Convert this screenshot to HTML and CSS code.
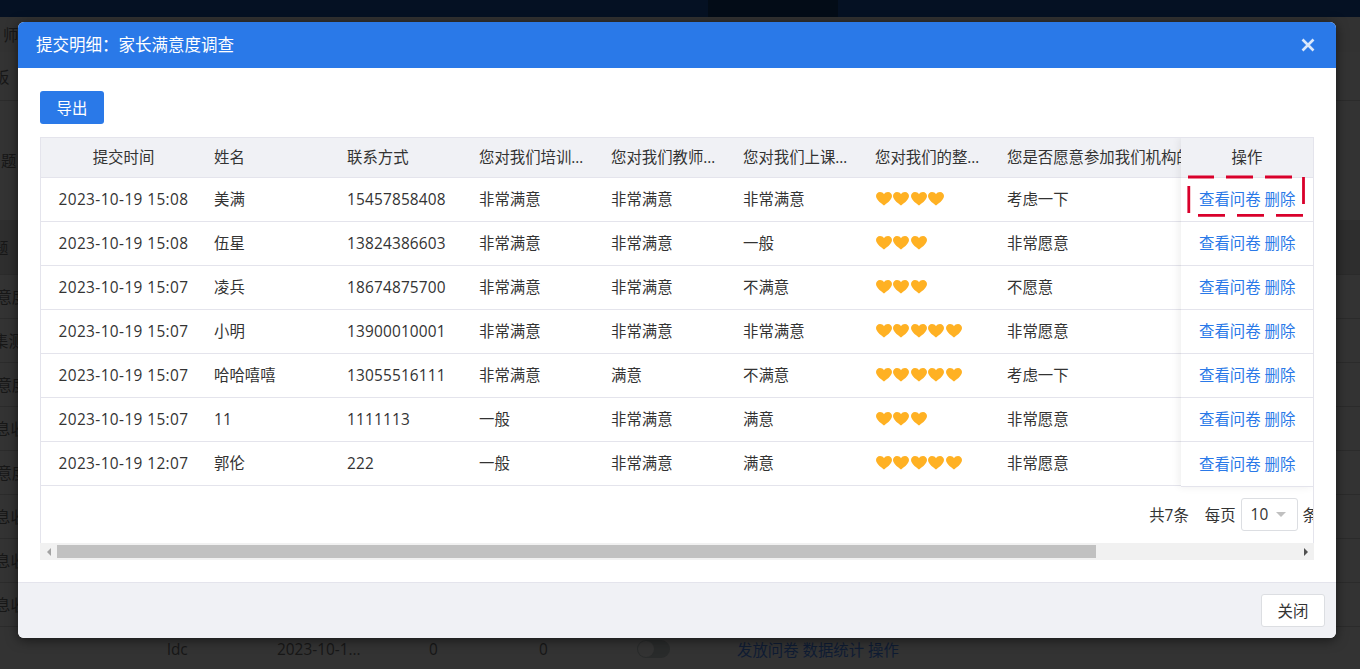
FILE: index.html
```html
<!DOCTYPE html>
<html lang="zh-CN">
<head>
<meta charset="utf-8">
<title>提交明细</title>
<link rel="stylesheet" href="styles.css">
</head>
<body>
<svg class="defs" width="0" height="0" aria-hidden="true"><symbol id="heart" viewBox="0 0 16 14"><path d="M8 13.6C6.6 12.3 0 8.4 0 4.1 0 1.7 1.8 0 4 0c1.7 0 3.2.9 4 2.2C8.800.9 10.300 0 12 0c2.200 0 4 1.700 4 4.100 0 4.300-6.600 8.200-8 9.500z"/></symbol></svg>
<div class="page">
  <div class="topbar"><div class="topbar-mid"></div></div>
  <div class="bg-block b1"><span class="lead l3">师</span></div>
  <div class="bg-block b2"><span class="lead ln6">板</span></div>
  <div class="bg-block b3"><span class="lead l1">题</span></div>
  <div class="bg-head"><span class="lead ln7">题</span></div>
  <div class="bg-row"><span class="lead ln19">满意度</span></div>
  <div class="bg-row"><span class="lead ln7b">集测</span></div>
  <div class="bg-row"><span class="lead ln19">满意度</span></div>
  <div class="bg-row"><span class="lead ln5">息收</span></div>
  <div class="bg-row"><span class="lead ln19">满意度</span></div>
  <div class="bg-row"><span class="lead ln5">息收</span></div>
  <div class="bg-row"><span class="lead ln5">息收</span></div>
  <div class="bg-row"><span class="lead ln5">息收</span></div>
  <div class="bg-row bg-last">
    <span class="c1">ldc</span><span class="c2">2023-10-1...</span><span class="c3">0</span><span class="c4">0</span>
    <span class="c5"><span class="switch"></span></span>
    <span class="bg-links">发放问卷 数据统计 操作</span>
  </div>

  <div class="modal">
    <div class="modal-head">
      <span class="modal-title">提交明细：家长满意度调查</span>
      <svg class="close-x" width="14" height="14" viewBox="0 0 14 14"><path d="M1.500 1.500l11 11M12.500 1.500l-11 11"/></svg>
    </div>
    <div class="modal-body">
      <button class="btn-primary">导出</button>
      <div class="grid-box">
        <table class="grid">
          <colgroup><col class="w1"><col class="w2"><col class="w3"><col class="w3"><col class="w3"><col class="w3"><col class="w3"><col class="w4"></colgroup>
          <thead>
            <tr><th class="center">提交时间</th><th>姓名</th><th>联系方式</th><th>您对我们培训机构的满意度</th><th>您对我们教师的满意度</th><th>您对我们上课的满意度</th><th>您对我们的整体评分</th><th>您是否愿意参加我们机构的</th></tr>
          </thead>
          <tbody>
            <tr><td class="center">2023-10-19 15:08</td><td>美满</td><td class="num">15457858408</td><td>非常满意</td><td>非常满意</td><td>非常满意</td><td><svg class="h"><use href="#heart"/></svg><svg class="h"><use href="#heart"/></svg><svg class="h"><use href="#heart"/></svg><svg class="h"><use href="#heart"/></svg></td><td>考虑一下</td></tr>
            <tr><td class="center">2023-10-19 15:08</td><td>伍星</td><td class="num">13824386603</td><td>非常满意</td><td>非常满意</td><td>一般</td><td><svg class="h"><use href="#heart"/></svg><svg class="h"><use href="#heart"/></svg><svg class="h"><use href="#heart"/></svg></td><td>非常愿意</td></tr>
            <tr><td class="center">2023-10-19 15:07</td><td>凌兵</td><td class="num">18674875700</td><td>非常满意</td><td>非常满意</td><td>不满意</td><td><svg class="h"><use href="#heart"/></svg><svg class="h"><use href="#heart"/></svg><svg class="h"><use href="#heart"/></svg></td><td>不愿意</td></tr>
            <tr><td class="center">2023-10-19 15:07</td><td>小明</td><td class="num">13900010001</td><td>非常满意</td><td>非常满意</td><td>非常满意</td><td><svg class="h"><use href="#heart"/></svg><svg class="h"><use href="#heart"/></svg><svg class="h"><use href="#heart"/></svg><svg class="h"><use href="#heart"/></svg><svg class="h"><use href="#heart"/></svg></td><td>非常愿意</td></tr>
            <tr><td class="center">2023-10-19 15:07</td><td>哈哈嘻嘻</td><td class="num">13055516111</td><td>非常满意</td><td>满意</td><td>不满意</td><td><svg class="h"><use href="#heart"/></svg><svg class="h"><use href="#heart"/></svg><svg class="h"><use href="#heart"/></svg><svg class="h"><use href="#heart"/></svg><svg class="h"><use href="#heart"/></svg></td><td>考虑一下</td></tr>
            <tr><td class="center">2023-10-19 15:07</td><td class="num">11</td><td class="num">1111113</td><td>一般</td><td>非常满意</td><td>满意</td><td><svg class="h"><use href="#heart"/></svg><svg class="h"><use href="#heart"/></svg><svg class="h"><use href="#heart"/></svg></td><td>非常愿意</td></tr>
            <tr><td class="center">2023-10-19 12:07</td><td>郭伦</td><td class="num">222</td><td>一般</td><td>非常满意</td><td>满意</td><td><svg class="h"><use href="#heart"/></svg><svg class="h"><use href="#heart"/></svg><svg class="h"><use href="#heart"/></svg><svg class="h"><use href="#heart"/></svg><svg class="h"><use href="#heart"/></svg></td><td>非常愿意</td></tr>
          </tbody>
        </table>
        <div class="pager">
          <span class="pg-total">共7条</span><span class="pg-label">每页</span>
          <span class="pg-select">10<i class="caret"></i></span><span class="pg-unit">条</span>
        </div>
        <div class="fixed-col">
          <div class="fixed-head">操作</div>
          <div class="fixed-cell"><a>查看问卷</a><a>删除</a></div>
          <div class="fixed-cell"><a>查看问卷</a><a>删除</a></div>
          <div class="fixed-cell"><a>查看问卷</a><a>删除</a></div>
          <div class="fixed-cell"><a>查看问卷</a><a>删除</a></div>
          <div class="fixed-cell"><a>查看问卷</a><a>删除</a></div>
          <div class="fixed-cell"><a>查看问卷</a><a>删除</a></div>
          <div class="fixed-cell fixed-last"><a>查看问卷</a><a>删除</a></div>
        </div>
      </div>
      <div class="scrollbar">
        <span class="sb-btn"><i class="tri-left"></i></span>
        <span class="sb-thumb"></span>
        <span class="sb-track"></span>
        <span class="sb-btn"><i class="tri-right"></i></span>
      </div>
    </div>
    <div class="modal-foot"><button class="btn-default">关闭</button></div>
    <svg class="annot" width="120" height="44" viewBox="0 0 120 44"><path d="M1 1h26M39 1h27M78 1h27M116.500 1v27M1.800 10v27M11 39.300h27M50 39.300h27M89 39.300h27"/></svg>
  </div>
</div>
</body>
</html>
```
FILE: styles.css
```css
* { box-sizing: border-box; }
html, body { margin: 0; padding: 0; }
body {
  font-family: "Open Sans", "Noto Sans CJK SC", sans-serif;
  font-size: 15.4px;
  color: #333;
  background: #333;
}
.defs { position: absolute; }
.page { position: relative; width: 1360px; height: 669px; overflow: hidden; background: #333; color: #171717; }

.topbar { height: 17px; background: #051123; }
.topbar-mid { width: 130px; height: 17px; margin-left: 708px; background: #030c17; }
.bg-block, .bg-head, .bg-row { display: flex; align-items: center; white-space: nowrap; border-bottom: 1px solid #2b2b2b; }
.b1 { height: 35px; border-bottom: 0; background: #323232; }
.b2 { height: 49px; }
.b3 { height: 119px; border-bottom: 0; }
.bg-head { height: 55px; background: #2e2e2e; }
.bg-row { height: 44px; }
.l3 { margin-left: 3px; }
.l1 { margin-left: 1px; }
.ln6 { margin-left: -6px; }
.ln7, .ln7b { margin-left: -7px; }
.ln5 { margin-left: -5px; }
.ln19 { margin-left: -19px; }
.bg-last { border-bottom: 0; }
.c1, .c2, .c3, .c4, .c5 { flex: none; }
.c1 { margin-left: 167px; width: 110px; }
.c2 { width: 152px; }
.c3 { width: 110px; }
.c4 { width: 98px; }
.c5 { width: 100px; }
.switch { display: block; width: 33px; height: 18px; border-radius: 9px; background: #292b2b; position: relative; }
.switch::before { content: ""; position: absolute; left: 1px; top: 1px; width: 16px; height: 16px; border-radius: 50%; background: #333; }
.bg-links { color: #0f1c33; }

.modal {
  position: absolute; left: 18px; top: 22px; width: 1318px; height: 616px;
  display: flex; flex-direction: column;
  background: #fff; border-radius: 6px;
  box-shadow: 0 2px 12px rgba(0, 0, 0, .55);
}
.modal-head {
  height: 46px; flex: none; display: flex; align-items: center; justify-content: space-between;
  padding: 0 21px 0 18px; background: #2a79e8; color: #fff; border-radius: 6px 6px 0 0;
}
.modal-title { font-size: 16.5px; line-height: 1; }
.close-x { fill: none; stroke: #dbe8fb; stroke-width: 2.6; }
.modal-body { flex: 1; min-height: 0; padding: 23px 22px 0; }
.btn-primary {
  display: block; width: 64px; height: 33px; margin: 0 0 13px; padding: 0; border: 0; border-radius: 3px;
  background: #2a79e8; color: #fff; font: inherit;
}
.grid-box {
  position: relative; width: 1274px; height: 406px; overflow: hidden;
  border: 1px solid #e4e4ec; border-bottom: 0;
}
.grid { border-collapse: separate; border-spacing: 0; table-layout: fixed; width: 1288px; }
.w1 { width: 165px; }
.w2 { width: 133px; }
.w3 { width: 132px; }
.w4 { width: 330px; }
.grid th, .grid td {
  padding: 0 8px; text-align: left; font-weight: 400; white-space: nowrap; overflow: hidden; text-overflow: ellipsis;
  border-bottom: 1px solid #e4e4ec; color: #333; line-height: 1;
}
.grid th { height: 40px; background: #f0f1f5; }
.grid td { height: 44px; }
.grid td.center { letter-spacing: .4px; }
.grid td.num { letter-spacing: .18px; }
.grid .center { text-align: center; }
.grid th:last-child { text-overflow: clip; }
.h { width: 16px; height: 14px; margin: 0 1px 0 .5px; fill: #ffb123; vertical-align: -1px; }
.pager { display: flex; justify-content: flex-end; align-items: center; height: 57px; margin-right: -5px; white-space: nowrap; color: #333; }
.pg-total { margin-right: 16px; }
.pg-label { margin-right: 5px; }
.pg-select {
  display: flex; align-items: center; width: 57px; height: 33px; padding-left: 9px; margin-right: 5px;
  border: 1px solid #dcdee2; border-radius: 3px; position: relative;
}
.caret { position: absolute; left: 34px; top: 13px; border: 5px solid transparent; border-top: 5px solid #c0c0c0; border-bottom: 0; }
.fixed-col {
  position: absolute; top: 0; right: 0; width: 132px; background: #fff;
  box-shadow: -2px 0 8px rgba(0, 0, 0, .07);
}
.fixed-head { height: 40px; display: flex; align-items: center; justify-content: center; background: #f0f1f5; border-bottom: 1px solid #e4e4ec; color: #333; line-height: 1; }
.fixed-cell { height: 44px; display: flex; align-items: center; padding-left: 18px; gap: 4px; border-bottom: 1px solid #e4e4ec; line-height: 1; }
.fixed-cell a { color: #2a79e8; }
.fixed-last { height: 45px; padding-top: 1px; }
.scrollbar { display: flex; width: 1274px; height: 17px; background: #f1f1f1; }
.sb-btn { flex: none; width: 17px; display: flex; align-items: center; justify-content: center; }
.sb-thumb { flex: none; width: 1039px; height: 13px; margin-top: 2px; background: #c1c1c1; }
.sb-track { flex: 1; }
.tri-left { border: 4px solid transparent; border-right: 4px solid #a3a3a3; border-left: 0; }
.tri-right { border: 4px solid transparent; border-left: 4px solid #505050; border-right: 0; }
.modal-foot {
  flex: none; height: 56px; display: flex; align-items: center; justify-content: flex-end;
  padding: 0 11px 1px 0; background: #f0f1f5; border-top: 1px solid #e4e4ec; border-radius: 0 0 6px 6px;
}
.btn-default {
  width: 64px; height: 33px; padding: 0; border: 1px solid #dcdee2; border-radius: 3px;
  background: #fff; color: #333; font: inherit;
}
.annot {
  position: absolute; left: 1169px; top: 154px; overflow: visible;
  fill: none; stroke: #d9002b; stroke-width: 2.800;
}
```
